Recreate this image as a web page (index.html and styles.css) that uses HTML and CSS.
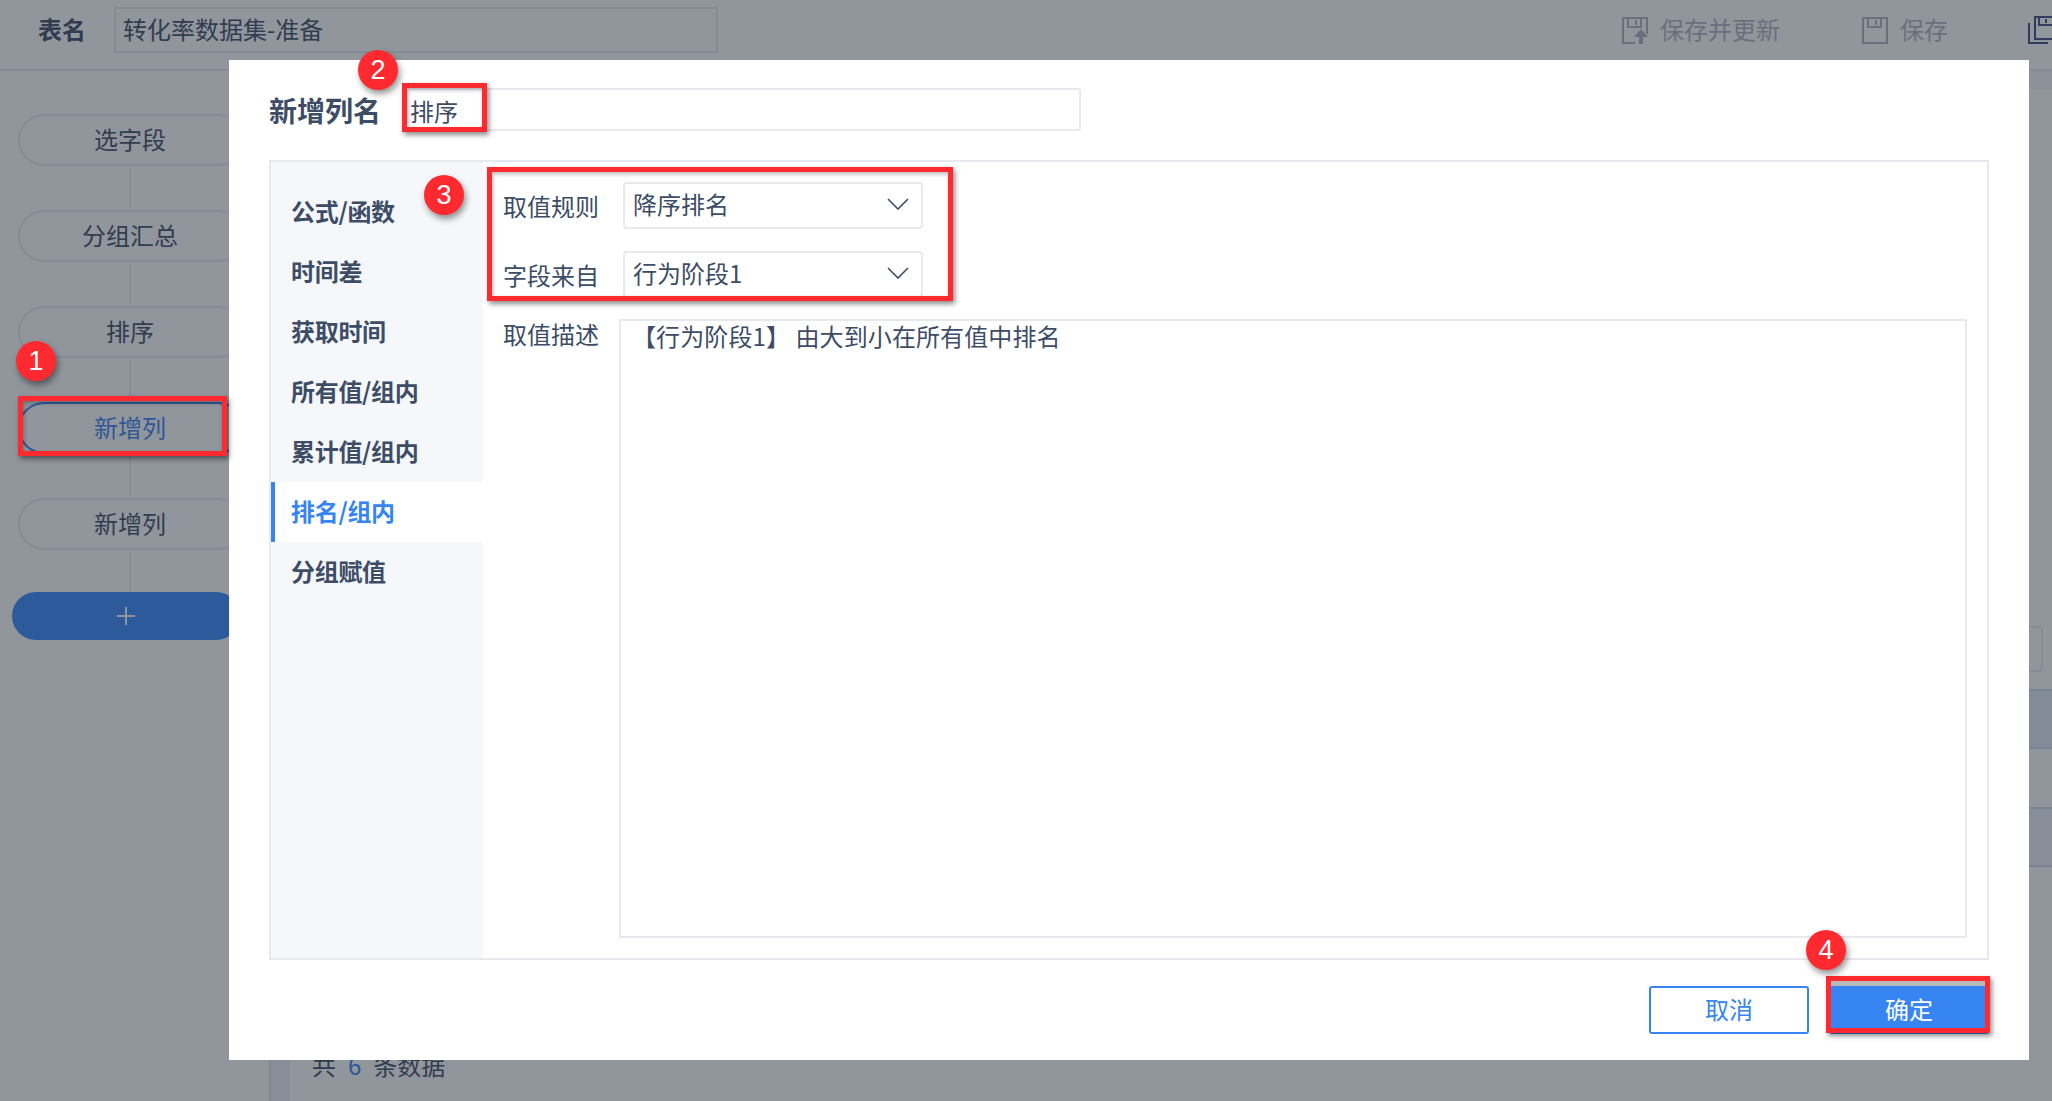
FILE: index.html
```html
<!DOCTYPE html>
<html lang="zh-CN">
<head>
<meta charset="utf-8">
<title>新增列</title>
<link rel="stylesheet" href="styles.css">
</head>
<body>
<div class="page">
  <header class="topbar">
    <span class="table-label">表名</span>
    <div class="table-name">转化率数据集-准备</div>
    <div class="toolbar">
      <div class="tool">
        <svg class="tool-icon" viewBox="0 0 26 28"><path class="s" d="M13 26H1V1h24v16"/><path class="s" d="M6 1v9h13V1M14 3v5"/><path class="f" d="M19 12l7 8h-5v7h-4v-7h-5z"/></svg>
        <span>保存并更新</span>
      </div>
      <div class="tool">
        <svg class="tool-icon" viewBox="0 0 26 28"><path class="s" d="M1 1h24v25H1z"/><path class="s" d="M6 1v9h13V1M14 3v5"/></svg>
        <span>保存</span>
      </div>
      <svg class="tool-icon tool-dark" viewBox="0 0 30 28"><path class="d" d="M7 1h23v22H7z"/><path class="d" d="M11 1v8h14V1M18 3v4"/><path class="d" d="M1 7v20h19"/></svg>
    </div>
  </header>
  <div class="workspace">
    <aside class="flow">
      <div class="node">选字段</div>
      <div class="link"></div>
      <div class="node">分组汇总</div>
      <div class="link"></div>
      <div class="node">排序</div>
      <div class="link"></div>
      <div class="node node-active">新增列</div>
      <div class="link"></div>
      <div class="node">新增列</div>
      <div class="link link-last"></div>
      <div class="add"><svg class="add-icon" viewBox="0 0 18 18"><path d="M9 0v18M0 9h18"/></svg></div>
    </aside>
    <div class="rail"></div>
    <main class="content">
      <div class="strip"></div>
      <div class="pager-box"></div>
      <div class="row row-first"></div>
      <div class="row row-second"></div>
      <div class="count">共<b>6</b>条数据</div>
    </main>
  </div>

  <div class="mask"></div>

  <section class="dialog">
    <div class="dialog-head">
      <span class="dialog-title">新增列名</span>
      <div class="name-input">排序</div>
    </div>
    <div class="panel">
      <nav class="menu">
        <div class="menu-item">公式/函数</div>
        <div class="menu-item">时间差</div>
        <div class="menu-item">获取时间</div>
        <div class="menu-item">所有值/组内</div>
        <div class="menu-item">累计值/组内</div>
        <div class="menu-item menu-active">排名/组内</div>
        <div class="menu-item">分组赋值</div>
      </nav>
      <div class="form">
        <div class="form-row">
          <span class="form-label">取值规则</span>
          <div class="select"><span>降序排名</span><svg class="chev" viewBox="0 0 22 12"><path d="M1 1l10 10L21 1"/></svg></div>
        </div>
        <div class="form-row">
          <span class="form-label form-label-low">字段来自</span>
          <div class="select"><span>行为阶段1</span><svg class="chev" viewBox="0 0 22 12"><path d="M1 1l10 10L21 1"/></svg></div>
        </div>
        <div class="form-row form-row-fill">
          <span class="form-label form-label-top">取值描述</span>
          <div class="desc">【行为阶段1】 由大到小在所有值中排名</div>
        </div>
      </div>
    </div>
    <div class="dialog-foot">
      <div class="btn btn-ghost">取消</div>
      <div class="btn btn-primary">确定</div>
    </div>
  </section>

  <div class="mark mark-1"></div>
  <div class="mark mark-2"></div>
  <div class="mark mark-3"></div>
  <div class="mark mark-4"></div>
  <div class="badge badge-1">1</div>
  <div class="badge badge-2">2</div>
  <div class="badge badge-3">3</div>
  <div class="badge badge-4">4</div>
</div>
</body>
</html>
```
FILE: styles.css
```css
* { box-sizing: border-box; }
html, body { margin: 0; padding: 0; }
body { font-family: "Noto Sans CJK SC", "Noto Sans", sans-serif; color: #3d4d66; }

.page {
  position: relative;
  width: 2052px;
  height: 1101px;
  overflow: hidden;
  background: #fff;
  display: flex;
  flex-direction: column;
  font-size: 24px;
}

/* top bar */
.topbar {
  flex: none;
  height: 71px;
  display: flex;
  align-items: flex-start;
  padding: 7px 0 0 38px;
  border-bottom: 2px solid #e8e9ee;
}
.table-label { flex: none; font-weight: 700; line-height: 44px; white-space: nowrap; }
.table-name {
  flex: none;
  margin-left: 28px;
  width: 604px;
  height: 46px;
  line-height: 40px;
  padding-left: 7px;
  border: 2px solid #e8e9ee;
}
.toolbar {
  flex: none;
  margin-left: 904px;
  display: flex;
  align-items: center;
  height: 42px;
  color: #b0b4bd;
}
.tool { flex: none; display: flex; align-items: center; gap: 12px; margin-right: 82px; white-space: nowrap; }
.tool:nth-child(2) { margin-right: 80px; }
.tool-icon { flex: none; width: 26px; height: 28px; margin-top: 5px; }
.tool-dark { width: 30px; height: 28px; margin-top: 3px; }
.s { fill: none; stroke: #b0b4bd; stroke-width: 2; }
.f { fill: #b0b4bd; }
.d { fill: none; stroke: #3d4d80; stroke-width: 2; }

/* page behind the mask */
.workspace { flex: 1; display: flex; min-height: 0; }
.flow {
  flex: none;
  width: 271px;
  padding: 43px 0 0 18px;
  border-right: 2px solid #dfe2e8;
  display: flex;
  flex-direction: column;
}
.node {
  flex: none;
  width: 226px;
  height: 52px;
  padding-right: 2px;
  border: 2px solid #e8e9ee;
  border-radius: 26px;
  text-align: center;
  line-height: 45px;
}
.node-active { border-color: #3685f2; color: #3685f2; }
.link {
  flex: none;
  width: 2px;
  height: 40px;
  margin: 2px 0 2px 111px;
  background: #e8e9ee;
}
.link-last { margin-bottom: 0; }
.add {
  flex: none;
  width: 228px;
  height: 48px;
  margin-left: -6px;
  border-radius: 24px;
  background: #3688fa;
  display: flex;
  align-items: center;
  justify-content: center;
}
.add-icon { width: 18px; height: 18px; }
.add-icon path { stroke: #fff; stroke-width: 2; fill: none; }
.rail { flex: none; width: 19px; background: #ecf1f5; }
.content { flex: 1; display: flex; flex-direction: column; min-width: 0; }
.strip { flex: none; height: 18px; background: #f5f7fa; }
.pager-box {
  flex: none;
  align-self: flex-end;
  width: 300px;
  height: 46px;
  margin: 537px 9px 0 0;
  border: 2px solid #e8e9ee;
  border-radius: 4px;
}
.row {
  flex: none;
  height: 60px;
  background: #ebf1fb;
  border-top: 2px solid #c9daf5;
  border-bottom: 2px solid #c9daf5;
}
.row-first { margin-top: 17px; background: #e3ebf9; }
.row-second { margin-top: 58px; }
.count {
  flex: none;
  height: 66px;
  margin-top: auto;
  padding-left: 22px;
  line-height: 60px;
}
.count b { font-weight: 400; color: #3685f2; margin: 0 12px; }

.mask {
  position: absolute;
  inset: 0;
  background: rgba(36, 44, 58, .5);
}

/* dialog */
.dialog {
  position: absolute;
  left: 229px;
  top: 60px;
  width: 1800px;
  height: 1000px;
  padding: 28px 40px 0;
  background: #fff;
}
.dialog-head { display: flex; align-items: center; height: 43px; }
.dialog-title { font-size: 28px; font-weight: 700; width: 134px; flex: none; padding-top: 1px; }
.name-input {
  width: 678px;
  height: 43px;
  padding-left: 5px;
  line-height: 41px;
  border: 2px solid #e8e9ee;
  border-radius: 3px;
}
.panel {
  display: flex;
  width: 1720px;
  height: 800px;
  margin-top: 29px;
  border: 2px solid #e8e9ee;
}
.menu {
  flex: none;
  width: 212px;
  padding-top: 20px;
  background: #f5f7fa;
}
.menu-item {
  height: 60px;
  padding-left: 20px;
  line-height: 58px;
  font-weight: 700;
  letter-spacing: -.3px;
}
.menu-active {
  padding-left: 16px;
  border-left: 4px solid #3685f2;
  background: #fff;
  color: #3685f2;
}
.form {
  flex: 1;
  min-width: 0;
  display: flex;
  flex-direction: column;
  gap: 22px;
  padding: 20px 20px 20px 20px;
}
.form-row { display: flex; flex: none; }
.form-row-fill { flex: 1; min-height: 0; margin-top: -1px; }
.form-label { flex: none; width: 120px; height: 47px; line-height: 47px; }
.form-label-low { line-height: 48px; }
.form-label-top { width: 116px; height: 29px; line-height: 29px; }
.select {
  width: 300px;
  height: 47px;
  padding: 0 12px 4px 8px;
  border: 2px solid #e8e9ee;
  border-radius: 4px;
  display: flex;
  align-items: center;
  justify-content: space-between;
}
.chev { width: 22px; height: 12px; flex: none; }
.chev path { fill: none; stroke: #3d4d66; stroke-width: 1.6; }
.desc {
  flex: 1;
  min-width: 0;
  padding: 0 0 0 11px;
  line-height: 30px;
  letter-spacing: .1px;
  border: 2px solid #e8e9ee;
}
.dialog-foot {
  display: flex;
  justify-content: flex-end;
  gap: 20px;
  width: 1720px;
  margin-top: 26px;
}
.btn {
  width: 160px;
  height: 48px;
  border-radius: 3px;
  text-align: center;
  line-height: 42px;
  border: 2px solid #3685f2;
  color: #3685f2;
}
.btn-primary { background: #3685f2; color: #fff; }

/* annotations */
.mark {
  position: absolute;
  border: 5px solid #ff2a30;
  box-shadow: 2px 3px 5px rgba(0, 0, 0, .45), inset 1px 2px 4px rgba(0, 0, 0, .28);
}
.mark-1 { left: 18px; top: 396px; width: 209px; height: 60px; }
.mark-2 { left: 402px; top: 83px; width: 85px; height: 49px; }
.mark-3 { left: 487px; top: 167px; width: 466px; height: 134px; }
.mark-4 {
  left: 1826px;
  top: 976px;
  width: 164px;
  height: 57px;
  box-shadow: 2px 3px 5px rgba(0, 0, 0, .45), inset 0 5px 0 #b9b9b9;
}
.badge {
  position: absolute;
  width: 40px;
  height: 40px;
  border-radius: 50%;
  background: #ff2a30;
  box-shadow: 2px 4px 6px rgba(0, 0, 0, .42);
  color: #fff;
  font-family: "Liberation Sans", sans-serif;
  font-size: 27px;
  line-height: 40px;
  text-align: center;
}
.badge-1 { left: 16px; top: 341px; }
.badge-2 { left: 358px; top: 50px; }
.badge-3 { left: 424px; top: 175px; }
.badge-4 { left: 1806px; top: 930px; }
```
